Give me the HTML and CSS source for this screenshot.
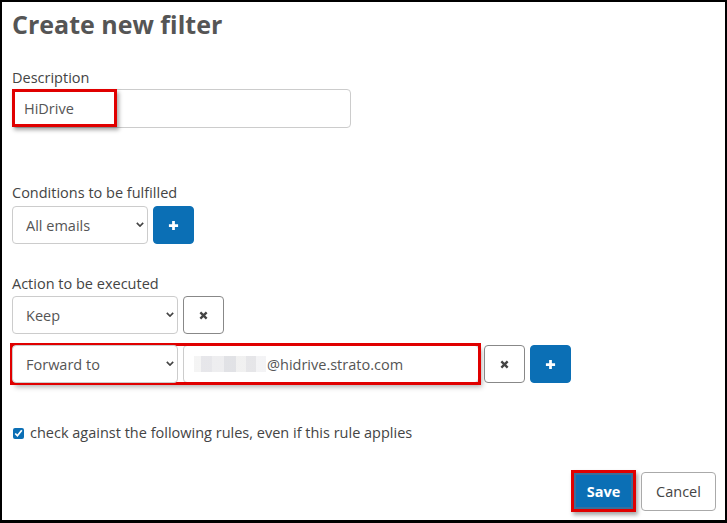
FILE: index.html
```html
<!DOCTYPE html>
<html lang="en">
    <head>
        <meta charset="UTF-8">
        <title>Create new filter</title>
        <link rel="stylesheet" href="styles.css">
    </head>
    <body>
        <div class="frame">
            <h1 class="title">Create new filter</h1>

            <div class="group group-description">
                <label class="field-label">Description</label>
                <div class="mark-wrap">
                    <input class="text-input wide" type="text" value="HiDrive">
                    <span class="mark mark-hidrive"></span>
                </div>
            </div>

            <div class="group group-conditions">
                <label class="field-label">Conditions to be fulfilled</label>
                <div class="row">
                    <div class="select-box w-conditions">
                        <select class="select"><option>All emails</option></select>
                        <svg class="chevron" viewBox="0 0 10 6"><path d="M1 1l4 4 4-4" /></svg>
                    </div>
                    <button class="icon-btn primary" type="button">
                        <svg viewBox="0 0 12 12"><path d="M6 1v10M1 6h10" /></svg>
                    </button>
                </div>
            </div>

            <div class="group group-action">
                <label class="field-label">Action to be executed</label>
                <div class="row">
                    <div class="select-box w-action">
                        <select class="select"><option>Keep</option></select>
                        <svg class="chevron" viewBox="0 0 10 6"><path d="M1 1l4 4 4-4" /></svg>
                    </div>
                    <button class="icon-btn" type="button">
                        <svg viewBox="0 0 10 10"><path d="M1.5 1.5l7 7M8.5 1.5l-7 7" /></svg>
                    </button>
                </div>
                <div class="row row-forward">
                    <div class="marked">
                        <div class="select-box w-action">
                            <select class="select"><option>Forward to</option></select>
                            <svg class="chevron" viewBox="0 0 10 6"><path d="M1 1l4 4 4-4" /></svg>
                        </div>
                        <div class="text-input email">
                            <span class="blur"></span>@hidrive.strato.com
                        </div>
                    </div>
                    <button class="icon-btn" type="button">
                        <svg viewBox="0 0 10 10"><path d="M1.5 1.5l7 7M8.5 1.5l-7 7" /></svg>
                    </button>
                    <button class="icon-btn primary" type="button">
                        <svg viewBox="0 0 12 12"><path d="M6 1v10M1 6h10" /></svg>
                    </button>
                </div>
            </div>

            <label class="check">
                <input type="checkbox" checked>
                check against the following rules, even if this rule applies
            </label>

            <div class="actions">
                <button class="btn btn-save" type="button">Save</button>
                <button class="btn btn-cancel" type="button">Cancel</button>
            </div>
        </div>
    </body>
</html>
```

FILE: styles.css
```css
* {
    margin: 0;
    padding: 0;
    box-sizing: border-box;
    font-family: 'Open Sans', sans-serif;
}

body {
    width: 727px;
    height: 523px;
    overflow: hidden;
    background: #000;
}

.frame {
    width: 727px;
    height: 523px;
    border-style: solid;
    border-color: #000;
    border-width: 2px 2px 3px 2px;
    background: #fff;
    padding: 0 9px 0 10px;
    color: #444;
}

.title {
    font-size: 25px;
    font-weight: 700;
    color: #555;
    line-height: 34px;
    margin-top: 5px;
}

.field-label {
    display: block;
    font-size: 14.5px;
    line-height: 20px;
    color: #444;
}

.group-description {
    margin-top: 27px;

    & .field-label {
        margin-bottom: 1px;
    }
}

.group-conditions {
    margin-top: 55px;

    & .field-label {
        margin-bottom: 3px;
    }
}

.group-action {
    margin-top: 30px;

    & .field-label {
        margin-bottom: 2px;
    }
}

.row {
    display: flex;
    gap: 5px;
    align-items: center;
}

.row-forward {
    margin-top: 11px;
}

.mark-wrap {
    position: relative;
    width: 339px;
}

.mark {
    position: absolute;
    border: 3px solid #e00000;
    box-shadow: 2px 3px 4px rgba(0, 0, 0, 0.35);
    pointer-events: none;
}

.mark-hidrive {
    left: 0;
    top: 0;
    width: 105px;
    height: 38px;
}

.text-input {
    height: 39px;
    border: 1px solid #ccc;
    border-radius: 4px;
    background: #fff;
    font-size: 14.5px;
    color: #555;
    padding: 0 11px;
    outline: none;
}

.wide {
    width: 339px;
}

.marked {
    display: flex;
    gap: 5px;
    outline: 3px solid #e00000;
    outline-offset: -1px;
    box-shadow: 3px 4px 5px rgba(0, 0, 0, 0.3);
}

.email {
    width: 296px;
    height: 38px;
    display: flex;
    align-items: center;
    padding-left: 10px;
    color: #555;
}

.blur {
    display: inline-block;
    width: 72px;
    height: 16px;
    margin-right: 1px;
    background:
        linear-gradient(90deg, #f3f3f3 0 10%, #e4e4e8 10% 25%, #ececee 25% 42%, #dedfe3 42% 58%, #efefef 58% 72%, #e3e3e6 72% 86%, #f2f2f4 86%);
    opacity: 0.9;
}

.select-box {
    position: relative;
    height: 38px;
}

.w-conditions {
    width: 136px;
}

.w-action {
    width: 166px;
}

.select {
    appearance: none;
    width: 100%;
    height: 100%;
    border: 1px solid #ccc;
    border-radius: 4px;
    background: #fff;
    font-size: 14.5px;
    color: #555;
    padding-left: 13px;
    outline: none;
}

.chevron {
    position: absolute;
    right: 4px;
    top: 16px;
    width: 8px;
    height: 5px;
    pointer-events: none;

    & path {
        fill: none;
        stroke: #444;
        stroke-width: 2;
    }
}

.icon-btn {
    width: 41px;
    height: 38px;
    border: 1px solid #888;
    border-radius: 4px;
    background: #fff;
    display: flex;
    justify-content: center;
    align-items: center;

    & svg {
        width: 9px;
        height: 9px;
    }

    & path {
        fill: none;
        stroke: #444;
        stroke-width: 2.6;
    }

    &.primary {
        background: #0b6fb5;
        border-color: #0b6fb5;

        & svg {
            width: 11px;
            height: 11px;
        }

        & path {
            stroke: #fff;
            stroke-width: 3;
        }
    }
}

.check {
    display: flex;
    align-items: center;
    gap: 6px;
    margin-top: 40px;
    font-size: 14.5px;
    line-height: 20px;
    color: #444;

    & input {
        width: 11px;
        height: 11px;
        accent-color: #0b6fb5;
        margin-left: 1px;
    }
}

.actions {
    display: flex;
    justify-content: flex-end;
    align-items: center;
    gap: 5px;
    margin-top: 27px;
}

.btn {
    height: 39px;
    border-radius: 4px;
    font-size: 14.5px;
}

.btn-save {
    width: 65px;
    height: 42px;
    border: 3px solid #e00000;
    border-radius: 0;
    background: #0b6fb5;
    box-shadow: inset 0 0 0 2px #3a6f9a, 2px 3px 4px rgba(0, 0, 0, 0.35);
    color: #fff;
    font-weight: 700;
}

.btn-cancel {
    width: 75px;
    border: 1px solid #aaa;
    background: #fff;
    color: #444;
}
```
